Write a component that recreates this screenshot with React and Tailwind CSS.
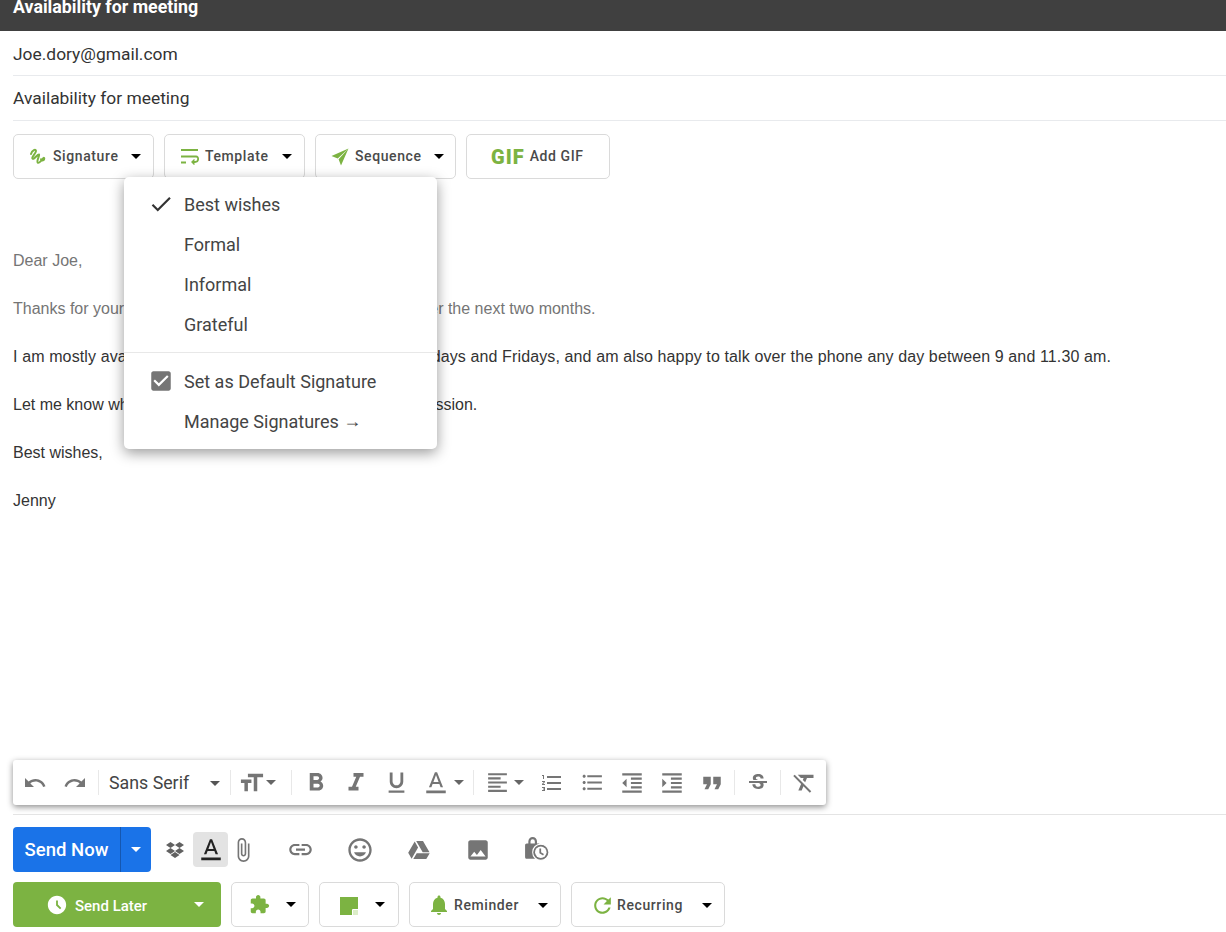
import React from 'react';

// material style glyph
function Icon({ d, size = 24, className = 'fill-[#757575]' }) {
  return (
    <svg viewBox="0 0 24 24" width={size} height={size} className={`shrink-0 ${className}`}>
      <path d={d} />
    </svg>
  );
}

function Caret({ color = 'border-t-black', className = '' }) {
  return <span className={`inline-block w-0 h-0 border-x-[5px] border-x-transparent border-t-[5px] ${color} ${className}`} />;
}

const paths = {
  undo: 'M12.5 8c-2.65 0-5.05.99-6.9 2.6L2 7v9h9l-3.62-3.62c1.39-1.16 3.16-1.88 5.12-1.88 3.54 0 6.55 2.31 7.6 5.5l2.37-.78C21.08 11.03 17.15 8 12.5 8z',
  redo: 'M18.4 10.6C16.55 8.99 14.15 8 11.5 8c-4.65 0-8.58 3.03-9.96 7.22L3.9 16c1.05-3.19 4.05-5.5 7.6-5.5 1.95 0 3.73.72 5.12 1.88L13 16h9V7l-3.6 3.6z',
  size: 'M2.5 4v3h5v12h3V7h5V4h-13zm19 5h-9v3h3v7h3v-7h3V9z',
  bold: 'M15.6 10.79c.97-.67 1.65-1.77 1.65-2.79 0-2.26-1.75-4-4-4H7v14h7.04c2.09 0 3.71-1.7 3.71-3.79 0-1.52-.86-2.82-2.15-3.42zM10 6.5h3c.83 0 1.5.67 1.5 1.5s-.67 1.5-1.5 1.5h-3v-3zm3.5 9H10v-3h3.5c.83 0 1.5.67 1.5 1.5s-.67 1.5-1.5 1.5z',
  italic: 'M10 4v3h2.21l-3.42 8H6v3h8v-3h-2.21l3.42-8H18V4z',
  underline: 'M12 17c3.31 0 6-2.69 6-6V3h-2.5v8c0 1.93-1.57 3.5-3.5 3.5S8.5 12.93 8.5 11V3H6v8c0 3.31 2.69 6 6 6zm-7 2v2h14v-2H5z',
  color: 'M11 2L5.5 16h2.25l1.12-3h6.25l1.12 3h2.25L13 2h-2zm-1.38 9L12 4.67 14.38 11H9.62zM3 19h18v2.5H3z',
  align: 'M15 15H3v2h12v-2zm0-8H3v2h12V7zM3 13h18v-2H3v2zm0 8h18v-2H3v2zM3 3v2h18V3H3z',
  numbered: 'M2 17h2v.5H3v1h1v.5H2v1h3v-4H2v1zm1-9h1V4H2v1h1v3zm-1 3h1.8L2 13.1v.9h3v-1H3.2L5 10.9V10H2v1zm5-6v2h14V5H7zm0 14h14v-2H7v2zm0-6h14v-2H7v2z',
  bullets: 'M4 10.5c-.83 0-1.5.67-1.5 1.5s.67 1.5 1.5 1.5 1.5-.67 1.5-1.5-.67-1.5-1.5-1.5zm0-6c-.83 0-1.5.67-1.5 1.5S3.17 7.5 4 7.5 5.5 6.83 5.5 6 4.83 4.5 4 4.5zm0 12c-.83 0-1.5.68-1.5 1.5s.68 1.5 1.5 1.5 1.5-.68 1.5-1.5-.67-1.5-1.5-1.5zM7 19h14v-2H7v2zm0-6h14v-2H7v2zm0-8v2h14V5H7z',
  outdent: 'M11 17h10v-2H11v2zm-8-5l4 4V8l-4 4zm0 9h18v-2H3v2zM3 3v2h18V3H3zm8 6h10V7H11v2zm0 4h10v-2H11v2z',
  indent: 'M3 21h18v-2H3v2zM3 8v8l4-4-4-4zm8 9h10v-2H11v2zM3 3v2h18V3H3zm8 6h10V7H11v2zm0 4h10v-2H11v2z',
  quote: 'M6 17h3l2-4V7H5v6h3zm8 0h3l2-4V7h-6v6h3z',
  strike: 'M6.85 7.08C6.85 4.37 9.45 3 12.24 3c1.64 0 3 .49 3.9 1.28.77.65 1.46 1.73 1.46 3.24h-3.01c0-.31-.05-.59-.15-.85-.29-.86-1.2-1.28-2.25-1.28-1.86 0-2.34 1.02-2.34 1.7 0 .48.25.88.74 1.21.38.25.77.48 1.41.7H7.39c-.21-.34-.54-.89-.54-1.92zM21 12v-2H3v2h9.62c1.15.45 1.96.75 1.96 1.97 0 1-.81 1.67-2.28 1.67-1.54 0-2.93-.54-2.93-2.51H6.4c0 .55.08 1.13.24 1.58.81 2.29 3.29 3.3 5.67 3.3 2.27 0 5.3-.89 5.3-4.05 0-.3-.01-1.16-.48-1.94H21V12z',
  clear: 'M3.27 5L2 6.27l6.97 6.97L6.5 19h3l1.57-3.66L16.73 21 18 19.73 3.55 5.27 3.27 5zM6 5v.18L8.82 8h2.4l-.72 1.68 2.1 2.1L14.21 8H20V5H6z',
  clip: 'M16.5 6v11.5c0 2.21-1.79 4-4 4s-4-1.79-4-4V5c0-1.38 1.12-2.5 2.5-2.5s2.5 1.12 2.5 2.5v10.5c0 .55-.45 1-1 1s-1-.45-1-1V6H10v9.5c0 1.38 1.12 2.5 2.5 2.5s2.5-1.12 2.5-2.5V5c0-2.21-1.79-4-4-4S7 2.79 7 5v12.5c0 3.04 2.46 5.5 5.5 5.5s5.5-2.46 5.5-5.5V6h-1.5z',
  link: 'M3.9 12c0-1.71 1.39-3.1 3.1-3.1h4V7H7c-2.76 0-5 2.24-5 5s2.24 5 5 5h4v-1.9H7c-1.71 0-3.1-1.39-3.1-3.1zM8 13h8v-2H8v2zm9-6h-4v1.9h4c1.71 0 3.1 1.39 3.1 3.1s-1.39 3.1-3.1 3.1h-4V17h4c2.76 0 5-2.24 5-5s-2.24-5-5-5z',
  emoji: 'M11.99 2C6.47 2 2 6.48 2 12s4.47 10 9.99 10C17.52 22 22 17.52 22 12S17.52 2 11.99 2zM12 20c-4.42 0-8-3.58-8-8s3.58-8 8-8 8 3.58 8 8-3.58 8-8 8zm3.5-9c.83 0 1.5-.67 1.5-1.5S16.33 8 15.5 8 14 8.67 14 9.5s.67 1.5 1.5 1.5zm-7 0c.83 0 1.5-.67 1.5-1.5S9.33 8 8.5 8 7 8.67 7 9.5 7.67 11 8.5 11zm3.5 6.5c2.33 0 4.31-1.46 5.11-3.5H6.89c.8 2.04 2.78 3.5 5.11 3.5z',
  drive: 'M7.7 3.5L1.2 14.8l3.4 5.9 6.5-11.3zM9.7 15.2l-3.4 5.8h13l3.4-5.8zM22.5 14.2L16 3H9.2l6.5 11.2z',
  image: 'M21 19V5c0-1.1-.9-2-2-2H5c-1.1 0-2 .9-2 2v14c0 1.1.9 2 2 2h14c1.1 0 2-.9 2-2zM8.5 13.5l2.5 3.01L14.5 12l4.5 6H5l3.5-4.5z',
  puzzle: 'M20.5 11H19V7c0-1.1-.9-2-2-2h-4V3.5C13 2.12 11.88 1 10.5 1S8 2.12 8 3.5V5H4c-1.1 0-1.99.9-1.99 2v3.8H3.5c1.49 0 2.7 1.21 2.7 2.7s-1.21 2.7-2.7 2.7H2V20c0 1.1.9 2 2 2h3.8v-1.5c0-1.49 1.21-2.7 2.7-2.7 1.49 0 2.7 1.21 2.7 2.7V22H17c1.1 0 2-.9 2-2v-4h1.5c1.38 0 2.5-1.12 2.5-2.5S21.88 11 20.5 11z',
  bell: 'M12 22c1.1 0 2-.9 2-2h-4c0 1.1.9 2 2 2zm6-6v-5c0-3.07-1.63-5.64-4.5-6.32V4c0-.83-.67-1.5-1.5-1.5s-1.5.67-1.5 1.5v.68C7.64 5.36 6 7.92 6 11v5l-2 2v1h16v-1l-2-2z',
  refresh: 'M17.65 6.35C16.2 4.9 14.21 4 12 4c-4.42 0-7.99 3.58-7.99 8s3.57 8 7.99 8c3.73 0 6.84-2.55 7.73-6h-2.08c-.82 2.33-3.04 4-5.65 4-3.31 0-6-2.69-6-6s2.69-6 6-6c1.66 0 3.14.69 4.22 1.78L13 11h7V4l-2.35 2.35z',
  clock: 'M11.99 2C6.47 2 2 6.48 2 12s4.47 10 9.99 10C17.52 22 22 17.52 22 12S17.52 2 11.99 2zm3.3 14.71L11 12.41V7h2v4.59l3.71 3.71-1.42 1.41z',
  check: 'M9 16.17L4.83 12l-1.41 1.41L9 19 21 7l-1.41-1.41z',
  checkbox: 'M19 3H5c-1.11 0-2 .9-2 2v14c0 1.1.89 2 2 2h14c1.11 0 2-.9 2-2V5c0-1.1-.89-2-2-2zm-9 14l-5-5 1.41-1.41L10 14.17l7.59-7.59L19 8l-9 9z',
};

function SignatureIcon() {
  return (
    <svg viewBox="0 0 20 20" width={20} height={20} fill="none" stroke="#7cb342" strokeWidth="2" strokeLinecap="round" strokeLinejoin="round" className="shrink-0">
      <path d="M3 7C4 3 8 1.5 8 4 8 6.5 3 10 4.5 11.5 6 13 9.500 7 11 7.500c1.200.5-3 6.500-1.200 8.200 1.600 1 4.700-3.700 5.700-4.700 1-.8 1 1.500 0 2.200-1 .6-2.500.3-2.500-1" />
    </svg>
  );
}

function TemplateIcon() {
  return (
    <svg viewBox="0 0 20 18" width={20} height={18} fill="none" stroke="#7cb342" strokeWidth="1.8" className="shrink-0">
      <path d="M1 2h17M1 8.500h15c3 0 3 5.500-1 5.500h-3M1 14.500h5" />
      <path d="M14.500 11.500L12 14l2.500 2.500" strokeWidth="1.4" />
    </svg>
  );
}

function PlaneIcon() {
  return (
    <svg viewBox="0 0 18 18" width={18} height={18} className="shrink-0 fill-[#7cb342]">
      <path d="M17.500 .5L.5 8l6.200 2.400zM17.500 .5L10 17.500 7.600 11.200z" />
    </svg>
  );
}

function DropboxIcon() {
  return (
    <svg viewBox="0 0 20 20" width={20} height={20} className="shrink-0 fill-[#616161]">
      <path d="M5.500 2L1 5l4.500 3L10 5zM14.500 2L10 5l4.500 3L19 5zM1 11l4.500 3L10 11 5.500 8zM19 11l-4.500-3L10 11l4.500 3zM10 12l-4.500 3 4.500 3 4.500-3z" />
    </svg>
  );
}

function LockClockIcon() {
  return (
    <svg viewBox="0 0 24 24" width={26} height={26} className="shrink-0">
      <path d="M1 8.500C1 7.700 1.700 7 2.500 7H4V5a4 4 0 0 1 8 0V7h1.500c.8 0 1.500.7 1.500 1.500V21H2.500C1.700 21 1 20.300 1 19.500zM6 7h4V5a2 2 0 0 0-4 0z" className="fill-[#757575]" fillRule="evenodd" />
      <circle cx="15.500" cy="15" r="7.500" fill="#757575" stroke="#fff" strokeWidth="1" />
      <circle cx="15.500" cy="15" r="5.300" fill="#fff" />
      <path d="M15 11.500v4l3 1.700" fill="none" stroke="#757575" strokeWidth="1.600" />
    </svg>
  );
}

function NoteIcon() {
  return (
    <svg viewBox="0 0 18 18" width={18} height={18} className="shrink-0">
      <path d="M0 0h18v18H0z" className="fill-[#7cb342]" />
      <path d="M18 12.500h-5.500V18" fill="none" stroke="#fff" strokeWidth="1" />
      <path d="M13 13h5v5h-5z" fill="#dcedc8" />
    </svg>
  );
}

function OutlineButton({ width, children, textClass = '' }) {
  return (
    <button className={`${width} h-[45px] shrink-0 flex items-center bg-white border border-[#dadada] rounded-[5px] text-[14px] font-medium tracking-[0.6px] text-[#4a4a4a] ${textClass}`}>
      {children}
    </button>
  );
}

function Sep({ className = '' }) {
  return <span className={`w-px h-[25px] bg-[#e8e8e8] shrink-0 ${className}`} />;
}

function ToolBtn({ d, width = 'w-[40px]', size = 24 }) {
  return (
    <span className={`${width} flex items-center justify-center shrink-0`}>
      <Icon d={d} size={size} />
    </span>
  );
}

function FloatingToolbar() {
  return (
    <div className="absolute left-[13px] top-[760px] w-[813px] h-[45px] bg-white rounded-[3px] shadow-[0_2px_6px_rgba(0,0,0,0.45)] flex items-center pl-[2px]">
      <ToolBtn d={paths.undo} />
      <ToolBtn d={paths.redo} />
      <Sep className="ml-[3px]" />
      <span className="w-[131px] shrink-0 flex items-center pl-[10px] pt-[1px] text-[17.8px] text-[#444]">
        Sans Serif
        <Caret color="border-t-[#555]" className="ml-auto mr-[10px]" />
      </span>
      <Sep />
      <span className="w-[60px] shrink-0 flex items-center pl-[7px]">
        <span className="-scale-x-100"><Icon d={paths.size} size={28} /></span>
        <Caret color="border-t-[#666]" className="ml-[0px]" />
      </span>
      <Sep className="mr-[4px]" />
      <ToolBtn d={paths.bold} size={30} />
      <ToolBtn d={paths.italic} size={30} />
      <ToolBtn d={paths.underline} size={27} />
      <span className="w-[57px] shrink-0 flex items-center pl-[7px]">
        <Icon d={paths.color} size={26} />
        <Caret color="border-t-[#666]" className="ml-[5px]" />
      </span>
      <Sep />
      <span className="w-[58px] shrink-0 flex items-center pl-[11px]">
        <Icon d={paths.align} size={25} />
        <Caret color="border-t-[#666]" className="ml-[4px]" />
      </span>
      <ToolBtn d={paths.numbered} />
      <ToolBtn d={paths.bullets} size={25} />
      <ToolBtn d={paths.outdent} size={26} />
      <ToolBtn d={paths.indent} size={26} />
      <ToolBtn d={paths.quote} size={30} />
      <Sep className="ml-[2px]" />
      <ToolBtn d={paths.strike} width="w-[45px]" />
      <Sep />
      <ToolBtn d={paths.clear} width="w-[47px]" size={27} />
    </div>
  );
}

function SignatureMenu() {
  const rowClass = 'h-[40px] flex items-center';
  return (
    <div className="absolute left-[124px] top-[177px] w-[313px] h-[272px] bg-white rounded-[5px] shadow-[0_4px_14px_rgba(0,0,0,0.4)] text-[18px] text-[#444] pt-[7px]">
      <div className={rowClass}>
        <span className="w-[60px] pl-[24px] shrink-0"><Icon d={paths.check} size={26} className="fill-[#333]" /></span>
        Best wishes
      </div>
      <div className={`${rowClass} pl-[60px]`}>Formal</div>
      <div className={`${rowClass} pl-[60px]`}>Informal</div>
      <div className={`${rowClass} pl-[60px]`}>Grateful</div>
      <div className="h-px bg-[#e8e8e8] mt-[8px] mb-[8px]" />
      <div className={rowClass}>
        <span className="w-[60px] pl-[24px] shrink-0"><Icon d={paths.checkbox} size={26} className="fill-[#757575]" /></span>
        Set as Default Signature
      </div>
      <div className={`${rowClass} pl-[60px] whitespace-pre`}>
        Manage Signatures <span className="font-['Liberation_Sans',sans-serif]">→</span>
      </div>
    </div>
  );
}

export default function App() {
  return (
    <div className="relative w-[1226px] h-[932px] overflow-hidden bg-white flex flex-col font-['Roboto',sans-serif]">
      <div className="h-[31px] shrink-0 bg-[#404040] pl-[13px] text-[17.8px] leading-[14px] font-bold text-white">
        Availability for meeting
      </div>

      <div className="ml-[13px] h-[45px] pt-[2px] shrink-0 flex items-center border-b border-[#e8eaed] text-[17.4px] text-[#333]">
        Joe.dory@gmail.com
      </div>
      <div className="ml-[13px] h-[45px] pt-[1px] shrink-0 flex items-center border-b border-[#e8eaed] text-[17.4px] text-[#333]">
        Availability for meeting
      </div>

      <div className="flex gap-[10px] pl-[13px] pt-[13px]">
        <OutlineButton width="w-[141px]">
          <span className="ml-[14px] mr-[5px]"><SignatureIcon /></span>
          Signature
          <Caret className="ml-[12px]" />
        </OutlineButton>
        <OutlineButton width="w-[141px]">
          <span className="ml-[15px] mr-[5px]"><TemplateIcon /></span>
          Template
          <Caret className="ml-[13px]" />
        </OutlineButton>
        <OutlineButton width="w-[141px]">
          <span className="ml-[15px] mr-[6px]"><PlaneIcon /></span>
          Sequence
          <Caret className="ml-[12px]" />
        </OutlineButton>
        <OutlineButton width="w-[144px]">
          <span className="ml-[24px] mr-[5px] text-[#7cb342] text-[20px] font-black tracking-[1px]">GIF</span>
          Add GIF
        </OutlineButton>
      </div>

      <div className="pl-[13px] pt-[70px] text-[16px] leading-[24px] font-['Liberation_Sans',sans-serif] text-[#333] flex flex-col gap-[24px]">
        <p className="text-[#757575]">Dear Joe,</p>
        <p className="text-[#757575]">Thanks for your email, and I would be happy to meet up over the next two months.</p>
        <p className="tracking-[0.12px]">I am mostly available on all Mondays, Wednesdays, Thursdays and Fridays, and am also happy to talk over the phone any day between 9 and 11.30 am.</p>
        <p>Let me know what works for you, and we can set up a discussion.</p>
        <p>Best wishes,</p>
        <p>Jenny</p>
      </div>

      <div className="mt-auto ml-[13px] border-t border-[#e4e4e4] pt-[12px] pb-[5px]">
        <div className="flex items-center h-[45px]">
          <div className="w-[138px] h-[45px] shrink-0 flex bg-[#1a73e8] rounded-[4px] text-white text-[18.5px] font-medium">
            <span className="w-[108px] flex items-center justify-center pt-[2px] border-r border-[#1557b0]">Send Now</span>
            <span className="flex-1 flex items-center justify-center"><Caret color="border-t-white" /></span>
          </div>
          <span className="ml-[12px] w-[24px] flex justify-center"><DropboxIcon /></span>
          <span className="ml-[6px] w-[35px] h-[35px] rounded-[4px] bg-[#e3e3e3] flex items-center justify-center">
            <Icon d={paths.color} size={26} className="fill-[#222]" />
          </span>
          <ToolBtn d={paths.clip} width="w-[30px]" size={26} />
          <span className="ml-[13px] flex">
            <ToolBtn d={paths.link} width="w-[59px]" size={27} />
            <ToolBtn d={paths.emoji} width="w-[59px]" size={28} />
            <ToolBtn d={paths.drive} width="w-[59px]" />
            <ToolBtn d={paths.image} width="w-[59px]" size={26} />
            <span className="w-[59px] flex justify-center"><LockClockIcon /></span>
          </span>
        </div>

        <div className="flex items-center gap-[10px] mt-[10px]">
          <div className="w-[208px] h-[45px] shrink-0 flex items-center bg-[#7cb342] rounded-[4px] text-white text-[15px] font-medium">
            <span className="ml-[33px] mr-[7px]"><Icon d={paths.clock} size={22} className="fill-white" /></span>
            <span className="pt-[3px]">Send Later</span>
            <Caret color="border-t-white" className="ml-auto mr-[17px]" />
          </div>
          <OutlineButton width="w-[78px]">
            <span className="ml-[17px]"><Icon d={paths.puzzle} size={21} className="fill-[#7cb342]" /></span>
            <Caret className="ml-[16px]" />
          </OutlineButton>
          <OutlineButton width="w-[80px]">
            <span className="ml-[20px] pt-[2px]"><NoteIcon /></span>
            <Caret className="ml-[17px]" />
          </OutlineButton>
          <OutlineButton width="w-[152px]" textClass="pt-[1px]">
            <span className="ml-[17px] mr-[3px]"><Icon d={paths.bell} size={24} className="fill-[#7cb342]" /></span>
            Reminder
            <Caret className="ml-[19px]" />
          </OutlineButton>
          <OutlineButton width="w-[154px]" textClass="pt-[1px]">
            <span className="ml-[18px] mr-[2px]"><Icon d={paths.refresh} size={25} className="fill-[#7cb342]" /></span>
            Recurring
            <Caret className="ml-[19px]" />
          </OutlineButton>
        </div>
      </div>

      <FloatingToolbar />
      <SignatureMenu />
    </div>
  );
}
